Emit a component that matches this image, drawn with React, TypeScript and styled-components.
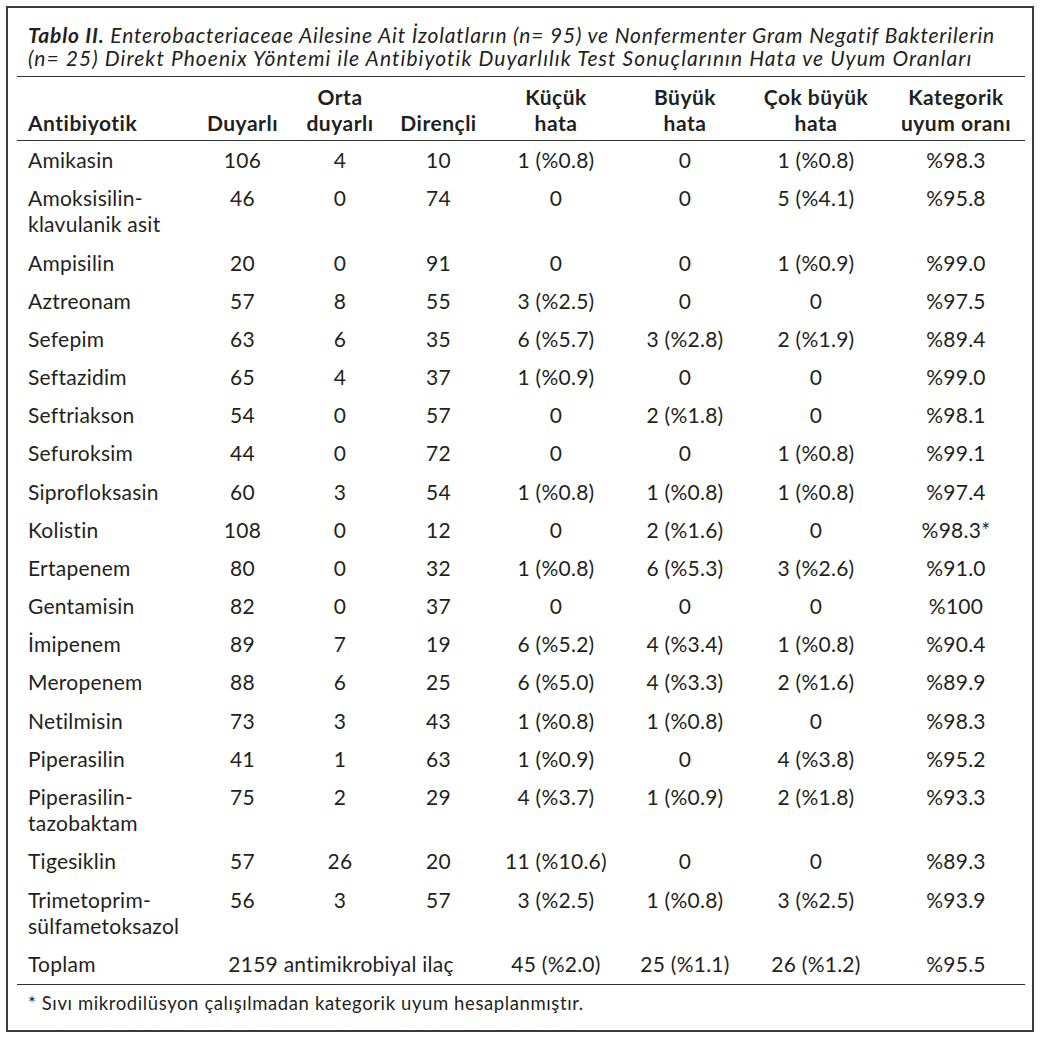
import React from "react";
import styled, { createGlobalStyle } from "styled-components";

const Global = createGlobalStyle`
  html, body { margin: 0; padding: 0; background: #ffffff; }
  body { font-family: Lato, "Open Sans", sans-serif; color: #231f20; }
`;

const Frame = styled.div`
  box-sizing: border-box;
  margin: 6px;
  width: 1028px;
  height: 1026px;
  border: 2px solid #3b3b3b;
  padding: 15px 7px 0 9px;
`;

const Caption = styled.div`
  padding-left: 11px;
  font-size: 21px;
  line-height: 23px;
  font-style: italic;
  white-space: nowrap;
  padding-bottom: 7px;
  border-bottom: 1.5px solid #333;
`;

const CaptionLine = styled.div<{ $spacing: number }>`
  letter-spacing: ${(p) => p.$spacing}px;
`;

const CaptionLead = styled.span`
  font-weight: 700;
`;

const Table = styled.table`
  width: 100%;
  border-collapse: collapse;
  font-size: 21px;
  letter-spacing: 0.25px;
  table-layout: fixed;
`;

const HeadCell = styled.th<{ $w: number; $left?: boolean }>`
  width: ${(p) => p.$w}px;
  font-weight: 700;
  letter-spacing: 0.5px;
  line-height: 26px;
  padding: 7px 0 4px ${(p) => (p.$left ? "11px" : "0")};
  text-align: ${(p) => (p.$left ? "left" : "center")};
  vertical-align: bottom;
  border-bottom: 1.5px solid #333;
`;

const Cell = styled.td<{ $left?: boolean }>`
  line-height: 26.5px;
  padding: 5.83px 0 5.83px ${(p) => (p.$left ? "11px" : "0")};
  text-align: ${(p) => (p.$left ? "left" : "center")};
  vertical-align: top;
  white-space: nowrap;
`;

const TotalRow = styled.tr`
  border-bottom: 1.5px solid #333;
`;

const Footnote = styled.div`
  padding: 8px 0 0 11px;
  font-size: 18.5px;
  letter-spacing: 0.6px;
  line-height: 20px;
`;

type Row = [string, string, string, string, string, string, string, string];

const rows: Row[] = [
  ["Amikasin", "106", "4", "10", "1 (%0.8)", "0", "1 (%0.8)", "%98.3"],
  ["Amoksisilin-\nklavulanik asit", "46", "0", "74", "0", "0", "5 (%4.1)", "%95.8"],
  ["Ampisilin", "20", "0", "91", "0", "0", "1 (%0.9)", "%99.0"],
  ["Aztreonam", "57", "8", "55", "3 (%2.5)", "0", "0", "%97.5"],
  ["Sefepim", "63", "6", "35", "6 (%5.7)", "3 (%2.8)", "2 (%1.9)", "%89.4"],
  ["Seftazidim", "65", "4", "37", "1 (%0.9)", "0", "0", "%99.0"],
  ["Seftriakson", "54", "0", "57", "0", "2 (%1.8)", "0", "%98.1"],
  ["Sefuroksim", "44", "0", "72", "0", "0", "1 (%0.8)", "%99.1"],
  ["Siprofloksasin", "60", "3", "54", "1 (%0.8)", "1 (%0.8)", "1 (%0.8)", "%97.4"],
  ["Kolistin", "108", "0", "12", "0", "2 (%1.6)", "0", "%98.3*"],
  ["Ertapenem", "80", "0", "32", "1 (%0.8)", "6 (%5.3)", "3 (%2.6)", "%91.0"],
  ["Gentamisin", "82", "0", "37", "0", "0", "0", "%100"],
  ["İmipenem", "89", "7", "19", "6 (%5.2)", "4 (%3.4)", "1 (%0.8)", "%90.4"],
  ["Meropenem", "88", "6", "25", "6 (%5.0)", "4 (%3.3)", "2 (%1.6)", "%89.9"],
  ["Netilmisin", "73", "3", "43", "1 (%0.8)", "1 (%0.8)", "0", "%98.3"],
  ["Piperasilin", "41", "1", "63", "1 (%0.9)", "0", "4 (%3.8)", "%95.2"],
  ["Piperasilin-\ntazobaktam", "75", "2", "29", "4 (%3.7)", "1 (%0.9)", "2 (%1.8)", "%93.3"],
  ["Tigesiklin", "57", "26", "20", "11 (%10.6)", "0", "0", "%89.3"],
  ["Trimetoprim-\nsülfametoksazol", "56", "3", "57", "3 (%2.5)", "1 (%0.8)", "3 (%2.5)", "%93.9"],
];

const Name: React.FC<{ text: string }> = ({ text }) => {
  const parts = text.split("\n");
  return (
    <>
      {parts.map((p, i) => (
        <React.Fragment key={i}>
          {i > 0 && <br />}
          {p}
        </React.Fragment>
      ))}
    </>
  );
};

export default function App() {
  return (
    <>
      <Global />
      <Frame>
        <Caption>
          <CaptionLine $spacing={0.83}>
            <CaptionLead>Tablo II.</CaptionLead> Enterobacteriaceae Ailesine Ait İzolatların (n= 95) ve
            Nonfermenter Gram Negatif Bakterilerin
          </CaptionLine>
          <CaptionLine $spacing={1.07}>
            (n= 25) Direkt Phoenix Yöntemi ile Antibiyotik Duyarlılık Test Sonuçlarının Hata ve Uyum Oranları
          </CaptionLine>
        </Caption>
        <Table>
          <thead>
            <tr>
              <HeadCell $w={167} $left>Antibiyotik</HeadCell>
              <HeadCell $w={95}>Duyarlı</HeadCell>
              <HeadCell $w={100}>
                Orta
                <br />
                duyarlı
              </HeadCell>
              <HeadCell $w={97}>Dirençli</HeadCell>
              <HeadCell $w={138}>
                Küçük
                <br />
                hata
              </HeadCell>
              <HeadCell $w={120}>
                Büyük
                <br />
                hata
              </HeadCell>
              <HeadCell $w={142}>
                Çok büyük
                <br />
                hata
              </HeadCell>
              <HeadCell $w={138}>
                Kategorik
                <br />
                uyum oranı
              </HeadCell>
            </tr>
          </thead>
          <tbody>
            {rows.map((r) => (
              <tr key={r[0]}>
                <Cell $left>
                  <Name text={r[0]} />
                </Cell>
                {r.slice(1).map((v, i) => (
                  <Cell key={i}>{v}</Cell>
                ))}
              </tr>
            ))}
            <TotalRow>
              <Cell $left>Toplam</Cell>
              <Cell colSpan={3}>2159 antimikrobiyal ilaç</Cell>
              <Cell>45 (%2.0)</Cell>
              <Cell>25 (%1.1)</Cell>
              <Cell>26 (%1.2)</Cell>
              <Cell>%95.5</Cell>
            </TotalRow>
          </tbody>
        </Table>
        <Footnote>* Sıvı mikrodilüsyon çalışılmadan kategorik uyum hesaplanmıştır.</Footnote>
      </Frame>
    </>
  );
}
